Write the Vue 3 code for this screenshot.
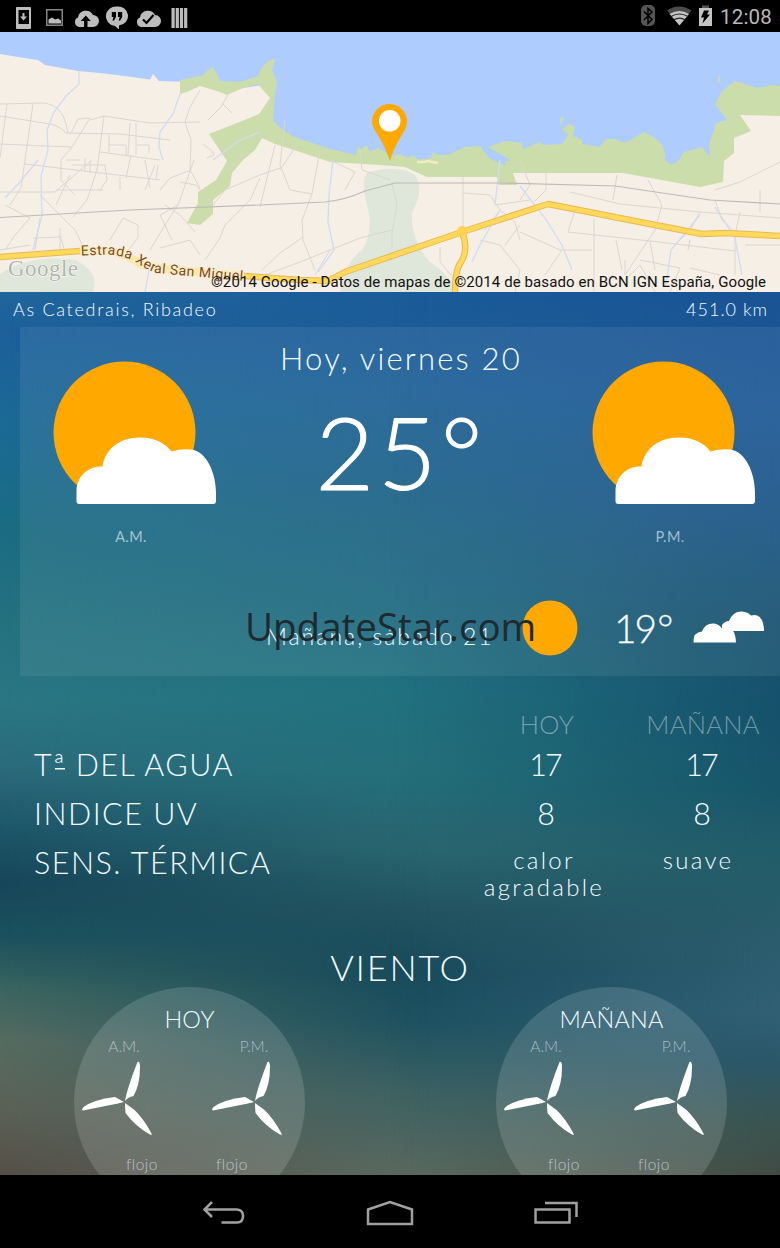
<script setup>
import { ref } from 'vue'

const place = ref({ name: 'As Catedrais, Ribadeo', distance: '451.0 km' })

const halves = ['A.M.', 'P.M.']

const rows = ref([
  { label: 'T', ordinal: 'ª', rest: ' DEL AGUA', today: '17', tomorrow: '17' },
  { label: 'INDICE UV', today: '8', tomorrow: '8' },
  { label: 'SENS. TÉRMICA', today: 'calor agradable', tomorrow: 'suave', small: true }
])

const winds = ref([
  { day: 'HOY', am: 'flojo', pm: 'flojo' },
  { day: 'MAÑANA', am: 'flojo', pm: 'flojo' }
])

// secondary streets of the map
const streets = [
  'M0 104L45 103Q62 106 66 124L68 133M0 116L50 124Q60 126 66 133L120 134L170 140M0 144L71 147M7 104L0 158M33 104L21 188L10 205M25 164L160 180M71 133L78 119L90 118L72 147L61 160V180L75 195M90 120L104 116L150 123L200 122M104 116L97 170L87 200L73 217M130 123L128 155M136 123V155M109 135V152M100 152L160 160M108 145H126V155M137 145H149V153M131 155L126 178M158 165L156 180M85 158V172M90 161V173M66 160H80M120 177V190',
  'M208 120L220 108L228 95M222 103L232 113M203 144L212 151L214 155L207 158M200 90L190 107L185 122L191 140L190 170L200 188M180 182L196 185L213 205L225 190L260 175M191 170L170 178L160 190M245 150L230 170M285 120L280 165L290 190L312 194L320 150M260 207L275 145M300 140L280 170M312 194L302 220L303 240L315 270M260 175L280 168M330 160L355 172L345 190M360 150L362 170L390 180',
  'M0 192H55L86 165L92 160M5 205L30 218L15 235L5 250M40 218L35 250M60 235L65 252M33 238L60 237M70 175L56 205M72 165L105 165L107 180L100 190M56 190H103M40 195L75 230L85 250M110 240L123 218L138 225V238L128 250M145 160L150 188M155 165L145 190M194 160L178 205L165 225L150 250M165 205L180 215L195 232M160 248L190 240L200 255M178 205L160 215L172 240M205 260L220 238L225 225L250 200L260 178M60 228V252L79 254M0 250L30 245',
  'M392 183L397 205L392 232V248M392 230L360 238L330 250L300 262L265 275M330 250L315 275M303 237L280 253L262 270M463 177V230M463 193L490 195L500 210L485 230M440 247V262L455 280M500 210L515 222L520 240M495 205L530 200M520 160L530 185L520 200M546 172V190L533 203M570 192L620 204L700 212L780 218M617 175L613 200M648 180L662 205L655 230L625 275M594 218V292M568 232L650 241L735 251M568 232L575 210M520 232L560 250H592M545 275L562 250M616 240L622 270M650 241L655 270M640 260L680 268M625 280L640 265L655 292M680 268L670 292M715 200L722 220L735 232V275M715 190L740 182L780 162M690 240L688 250M480 240L500 245L520 270L515 292M520 225L505 245M740 212L735 235M700 212L690 230L680 240M625 260V275M690 268L720 275M745 245H780M760 190V212'
]
</script>

<template>
  <div class="device">
    <header class="status">
      <svg class="status-left" viewBox="0 0 200 24" width="200" height="24">
        <g fill="#bdbdbd">
          <path fill-rule="evenodd" d="M17 2h13q1 0 1 1v20q0 1-1 1H17q-1 0-1-1V3q0-1 1-1zm1.500 3v14h10.500V5z" />
          <path d="M22.500 8h2v3.500h2.500l-3.500 4-3.500-4h2.500z" />
          <path fill-rule="evenodd" d="M46 4h17v17H46zm1.500 1.500v14h14v-14z" opacity=".7" />
          <path d="M48.500 18.500v-4l3.500-2 3 2 3-1 3 2v3z" />
          <path d="M79 22a5 5 0 0 1-1-9.500A8 8 0 0 1 93 10a6 6 0 0 1 0 12z" />
          <path d="M117 1.500a10 9.500 0 0 1 2 19v4l-4-3.500A10 9.700 0 0 1 117 1.500z" />
          <path d="M141 22a5 5 0 0 1-1-9.500A8 8 0 0 1 155 10a6 6 0 0 1 0 12z" />
          <path d="M171.500 3h3.200v20h-3.200zM175.700 3h3.200v20h-3.200zM179.900 3h3.200v20h-3.200zM184.100 3h3.200v20h-3.200z" />
        </g>
        <path fill="#000" d="M85.800 10.500l5 5.500h-3.300v7h-3.400v-7h-3.300zM111.800 7h4.200v5l-2 3.500h-1.500l1-3.500h-1.700zM118 7h4.200v5l-2 3.500h-1.500l1-3.500H118z" />
        <path fill="none" stroke="#000" stroke-width="2.200" d="M143 14.500l3.500 3.500 7-8" />
      </svg>
      <div class="status-right">
        <svg viewBox="0 0 76 24" width="76" height="24">
          <rect x="1" y="1" width="14" height="21" rx="5" fill="#555" />
          <path fill="none" stroke="#000" stroke-width="1.500" d="M4 7.500l8 8-4 4v-15l4 3.500-8 8" />
          <path fill="#4b4b4b" d="M27 6.500q12-8 24.500 0L39.500 21z" />
          <path fill="#c4c4c4" d="M29.500 10q10-6 19.500 0L39.500 21.500z" />
          <path fill="none" stroke="#222" stroke-width="1.200" d="M31 12.500q8.500-5 17 0M34 15.800q5.500-3.500 11 0" />
          <path fill="#c4c4c4" d="M59 4h13v18H59z" />
          <path fill="#555" d="M62 1.500h7V4h-7z" />
          <path fill="#000" d="M64 6.500h5l-2 4h3l-7.500 9 1.500-6h-3z" />
        </svg>
        <span class="clock">12:08</span>
      </div>
    </header>

    <svg class="map" viewBox="0 32 780 260" width="780" height="260">
      <defs>
        <path id="road-a" d="M81 255.500L108 254.500Q126 256 137 263Q147 270 156 273L244 281" />
      </defs>
      <rect y="32" width="780" height="260" fill="#aecdfe" />
      <path fill="#f6efe6" d="M0 54L18 57L38 60L45 65L78 71L105 73.500L150 79.500L153 74L159 81L190 82L230 90L262 85L271 98L262 120L280 145L360 158L500 170L700 172L735 115L780 112V292H0z" />
      <path fill="#dee7d9" d="M368 172Q400 164 415 175Q425 190 412 212Q410 240 430 262Q450 275 456 292H340Q345 262 362 250Q374 232 367 205Q360 180 368 172zM0 274Q30 254 75 260Q100 272 93 292H0z" />
      <path
        fill="#cbddaa"
        d="M180 80L195 77L203 75L208 70L213 67L218 76L220 81L240 82L258 76L262 67L268 61L275 59L272 70L277 82L275 95L273 120Q283 133 300 139L330 149L356 155L358 147L362 149L366 145L370 152L377 148L384 151L390 157L400 154L408 158L414 155L418 160L431 158L433 151L437 155L448 155L465 147L480 146L484 152L502 162L510 160L488 147L505 141L522 143L523 149L540 142L543 145L562 144L568 135L562 129L569 124L575 127L573 136L582 140V144L600 147L606 139L615 139L625 143L644 132L655 138L663 146L666 160L676 163L684 152L702 147L710 157L709 145L716 123L727 120L715 104L722 91L735 81L757 88L772 85L780 86V116L740 115L751 131L734 138V153L724 161L723 182L700 187L623 173H513L517 185H499L497 177H427L405 167L380 165L330 162L300 152L275 144L262 138L255 150L243 160L232 173L230 186L213 200V214L200 225L187 223L198 203L198 192L216 180L227 161L221 152L209 134L237 123L259 114L270 98L258 84L243 88L227 95L217 91L200 86L187 92L180 94z"
      />
      <path fill="#cbddaa" d="M560 118l4-1-3 10zM718 80l2-6v8h-4z" />
      <path fill="none" stroke="#aecdfe" stroke-width="3" d="M484 148L490 157L505 164M665 158L671 163L679 158" />
      <path fill="none" stroke="#dcd6d0" stroke-width="1" v-for="(d, i) in streets" :key="i" :d="d" />
      <path fill="none" stroke="#cfdcf3" stroke-width="1.300" d="M79 71V84L66 96L54 112L47 130L48 150L41 176L42 215L33 250M180 94L173 114L160 132L159 147L163 160M38 160L20 182L5 198M333 160L329 195L328 222L334 250L318 272M520 186L545 218L562 245L572 270M700 215L671 250L666 285M715 207L735 238L742 275M500 160L495 205M500 210L480 245L472 262M213 160L240 140L260 132M145 292L150 265" />
      <path fill="none" stroke="#bfbab5" stroke-width="1.200" d="M0 217.500L60 214L130 210L260 205L325 202Q345 200 365 191L395 183H500L615 186L710 200L780 204" />
      <path fill="none" stroke="#f3ecc0" stroke-width="2.500" d="M417 162h8l2-1 11 2" />
      <g fill="none" stroke-linejoin="round">
        <path stroke="#e9b850" stroke-width="6.500" d="M0 257L80 251M244 276L300 280L328 281L345 272L462 232L548 204L650 224L702 234L725 233L780 236M462 232Q469 250 461 262Q455 270 455 292" />
        <path stroke="#ffd95c" stroke-width="4.500" d="M0 257L80 251M244 276L300 280L328 281L345 272L462 232L548 204L650 224L702 234L725 233L780 236M462 232Q469 250 461 262Q455 270 455 292" />
        <path stroke="#fbe9a0" stroke-width="8" d="M80 251L112 251Q130 256 142 265L165 269L244 276" />
      </g>
      <circle cx="462" cy="231" r="5" fill="#ffd24f" />
      <text class="road"><textPath href="#road-a" textLength="166">Estrada Xeral San Miguel</textPath></text>
      <text class="glogo" x="8" y="276" textLength="70">Google</text>
      <text class="credit" x="211" y="287" textLength="555">©2014 Google - Datos de mapas de ©2014 de basado en BCN IGN España, Google</text>
      <path fill="#ffa800" d="M390 161Q386 148 376 132Q372 126 372 121.500a17.500 17.500 0 0 1 35 0Q407 127 403 133Q393 149 390 161z" />
      <circle cx="389.700" cy="120.800" r="10.800" fill="#fff" />
    </svg>

    <main class="content">
      <div class="place">
        <span class="place-name">{{ place.name }}</span>
        <span class="distance">{{ place.distance }}</span>
      </div>

      <section class="forecast">
        <div class="today">
          <div v-for="(half, i) in halves" :key="half" class="half" :class="{ last: i === 1 }">
            <svg viewBox="0 0 170 144" width="170" height="144">
              <circle cx="78.500" cy="71.500" r="71" fill="#ffa800" />
              <path fill="#fff" d="M33 143Q30.500 143 30.500 140V130C31 115 42 105 56.500 105.500C59 88 74 76 95 76.500Q115 77 125.500 90.500Q135 87.500 145 88.500C160 90 170 111 170 132V140Q170 143 167 143z" />
            </svg>
            <span class="half-label">{{ half }}</span>
          </div>
          <div class="now">
            <h1>Hoy, viernes 20</h1>
            <p class="temp">25<span>°</span></p>
          </div>
        </div>
        <div class="tomorrow">
          <span class="tomorrow-label">Mañana, sábado 21</span>
          <svg class="sun" viewBox="0 0 56 56" width="56" height="56">
            <circle cx="28" cy="28" r="27.500" fill="#ffa800" />
          </svg>
          <span class="tomorrow-temp">19<span>°</span></span>
          <svg class="clouds" viewBox="0 0 72 34" width="72" height="34">
            <path fill="#fff" d="M29 20V14Q32 10 36 10Q40 0 49 .5Q55 1 58 4.500Q67 2 70 12Q71 16 71 20H42z" />
            <path fill="#fff" d="M.5 31.500Q0 21 9 20.500Q12 12 21 12.500Q26 13 28.500 17Q42 12 43 31.500z" />
          </svg>
          <span class="watermark">UpdateStar.com</span>
        </div>
      </section>

      <section class="conditions">
        <div class="row head">
          <span></span>
          <span>HOY</span>
          <span>MAÑANA</span>
        </div>
        <div v-for="row in rows" :key="row.label" class="row" :class="{ small: row.small }">
          <span class="label">{{ row.label }}<u v-if="row.ordinal">{{ row.ordinal }}</u>{{ row.rest }}</span>
          <span class="value">{{ row.today }}</span>
          <span class="value">{{ row.tomorrow }}</span>
        </div>
      </section>

      <h2>VIENTO</h2>
      <section class="wind">
        <div v-for="wind in winds" :key="wind.day" class="dial">
          <h3>{{ wind.day }}</h3>
          <div class="mills">
            <div v-for="half in halves" :key="half" class="mill">
              <span>{{ half }}</span>
              <svg viewBox="0 0 72 75" width="72" height="75">
                <g fill="#fff">
                  <path d="M43 40Q45 28 55.500 1Q58 0 58 6Q58 24 51.500 35Q46 36 43 40z" />
                  <path d="M42 41L33 36Q12 38.500 1.500 46Q-1 49 1 49.500L36 42.500z" />
                  <path d="M43 42Q43 47 43.500 52Q54 66 68 73.500Q71 75 69 71.500Q61 57 52.500 49z" />
                </g>
              </svg>
            </div>
          </div>
          <div class="strength">
            <span>{{ wind.am }}</span>
            <span>{{ wind.pm }}</span>
          </div>
        </div>
      </section>
    </main>

    <nav class="navbar">
      <svg viewBox="0 0 44 24" width="44" height="24">
        <path d="M10 1L2.500 8.500L10 16M3 8.500H35Q41 9 41 15Q41 21.500 35 21.500H19.500" />
      </svg>
      <svg viewBox="0 0 48 26" width="48" height="26">
        <path d="M2 9.500L24 2L46 9.500V24H2z" />
      </svg>
      <svg viewBox="0 0 44 24" width="44" height="24">
        <path d="M1.500 8.500H35.500V21.500H1.500zM11 2H42.500V16" />
      </svg>
    </nav>
  </div>
</template>

<style>
body {
  margin: 0;
  background: #000;
}
</style>

<style scoped>
.device {
  width: 780px;
  height: 1248px;
  display: flex;
  flex-direction: column;
  overflow: hidden;
  color: #f2fbff;
  font-family: Lato, 'Liberation Sans', sans-serif;
  font-weight: 300;
}

h1,
h2,
h3,
p {
  margin: 0;
  font-weight: 300;
}

.status {
  height: 32px;
  display: flex;
  align-items: center;
  background: #000;
  padding: 0 8px 0 0;
  box-sizing: border-box;
}

.status-left {
  margin-top: 1px;
}

.status-right {
  display: flex;
  align-items: center;
  gap: 4px;
  margin-left: auto;
}

.clock {
  font: 400 20.5px/32px Roboto, sans-serif;
  color: #b8b8b8;
  letter-spacing: 0.2px;
  margin-top: 2px;
}

.map {
  display: block;
  flex: none;
}

.road {
  font: 400 14px Roboto, sans-serif;
  fill: #7d4a24;
  stroke: #fbf0d0;
  stroke-width: 2px;
  paint-order: stroke;
}

.glogo {
  font: 400 23px 'Liberation Serif', serif;
  fill: #b5b3ad;
  stroke: #fff;
  stroke-width: 1px;
  paint-order: stroke;
}

.credit {
  font: 400 15px Roboto, sans-serif;
  fill: #111;
}

.content {
  position: relative;
  z-index: 0;
  height: 883px;
  overflow: hidden;
  background: linear-gradient(#1b5b99 0, #1f6097 100px, #1d6288 200px, #1f6980 310px, #217280 400px, #24707b 480px, #2a666f 560px, #21535f 620px, #174a5b 680px, #1c5160 730px, #3c6263 800px, #5b6b61 883px);
}

.content::before,
.content::after {
  content: '';
  position: absolute;
  inset: 0;
  z-index: -1;
}

.content::before {
  background: linear-gradient(#20669b 0, #1c609a 40px, #1b6995 130px, #1b6c82 240px, #24717f 330px, #2a7683 410px, #2b6b7b 475px, #1d5669 535px, #164659 590px, #1b515d 645px, #3c655f 700px, #566b60 750px, #5b6055 820px, #544f47 883px);
  mask-image: linear-gradient(90deg, #000, transparent 55%);
}

.content::after {
  background: linear-gradient(#195394 0, #1d5995 120px, #1b5587 220px, #18516f 330px, #15516b 420px, #17566a 500px, #235d69 570px, #295c6b 630px, #305f74 720px, #2b586a 770px, #395450 830px, #414b45 883px);
  mask-image: linear-gradient(270deg, #000, transparent 50%);
}

.place {
  height: 35px;
  padding: 0 12px 0 13px;
  display: flex;
  justify-content: space-between;
  font-size: 18px;
  line-height: 35px;
}

.place-name {
  letter-spacing: 1.7px;
}

.distance {
  letter-spacing: 1px;
}

.forecast {
  height: 349px;
  margin-left: 20px;
  background: rgba(255, 255, 255, 0.07);
}

.today {
  display: grid;
  grid-template-columns: 222px 1fr 220px;
  height: 256px;
}

.half {
  grid-column: 1;
  grid-row: 1;
  display: flex;
  flex-direction: column;
  align-items: center;
  padding-top: 34px;
}

.half.last {
  grid-column: 3;
}

.half-label {
  margin-top: 23px;
  font-size: 14.5px;
  line-height: 18px;
  letter-spacing: 0.4px;
  color: rgba(242, 251, 255, 0.6);
  font-weight: 400;
}

.now {
  grid-column: 2;
  grid-row: 1;
  text-align: center;
}

h1 {
  margin-top: 11px;
  font-size: 31px;
  line-height: 40px;
  letter-spacing: 2.2px;
}

.temp {
  font-size: 101px;
  line-height: 120px;
  margin-top: 13px;
  letter-spacing: 4px;
  color: #fff;
  -webkit-text-stroke: 1px #fff;
}

.tomorrow {
  position: relative;
  display: flex;
  align-items: center;
  height: 90px;
  padding-left: 246px;
}

.tomorrow-label {
  width: 256px;
  font-size: 23px;
  letter-spacing: 2px;
  white-space: nowrap;
  padding-top: 16px;
}

.tomorrow-temp {
  width: 79px;
  margin-left: 36px;
  font-size: 39px;
  letter-spacing: -2px;
  margin-top: -1px;
  -webkit-text-stroke: 0.3px #fff;
}

.tomorrow-temp span {
  margin-left: 2px;
}

.watermark {
  position: absolute;
  left: 225px;
  top: 16px;
  font: 400 38.5px/54px 'Open Sans', sans-serif;
  color: #1d2a30;
}

.conditions {
  padding: 30px 0 0 34px;
}

.row {
  display: grid;
  grid-template-columns: 433px 156px 156px;
  height: 49px;
  line-height: 49px;
  font-size: 30.5px;
}

.label {
  letter-spacing: 1.5px;
}

.label u {
  text-decoration: none;
  background: linear-gradient(currentColor, currentColor) 2px 22px / 10px 1.5px no-repeat;
}

.row.head {
  height: 34px;
  line-height: 37px;
  font-size: 25.5px;
  letter-spacing: 0.3px;
  color: rgba(242, 251, 255, 0.42);
}

.head span,
.value {
  text-align: center;
}

.head span {
  padding-left: 4px;
}

.value {
  letter-spacing: -2px;
}

.small .value {
  font-size: 24px;
  line-height: 27px;
  letter-spacing: 2.3px;
  padding: 8px 8px 0 6px;
}

.small .value:last-child {
  padding-right: 12px;
}

h2 {
  margin-top: 58px;
  padding-left: 20px;
  text-align: center;
  font-size: 36px;
  line-height: 44px;
  letter-spacing: 1.8px;
}

.wind {
  display: flex;
  gap: 192px;
  margin-top: -2px;
  padding-left: 74px;
}

.dial {
  width: 231px;
  height: 231px;
  margin-right: -1px;
  flex: none;
  border-radius: 50%;
  background: rgba(255, 255, 255, 0.14);
  text-align: center;
}

h3 {
  padding-top: 17px;
  font-size: 23.5px;
  line-height: 30px;
  letter-spacing: 0.2px;
}

.mills {
  display: flex;
  gap: 58px;
  padding-left: 8px;
}

.mill {
  width: 72px;
  font-size: 15.5px;
  line-height: 20px;
  color: rgba(242, 251, 255, 0.55);
}

.mill span {
  display: block;
  height: 27px;
  line-height: 25px;
  padding-left: 12px;
}

.mill svg {
  display: block;
}

.strength {
  display: flex;
  gap: 58px;
  padding-left: 52px;
  margin-top: 18px;
  font-size: 15.5px;
  line-height: 20px;
  letter-spacing: 0.5px;
  color: rgba(242, 251, 255, 0.6);
}

.navbar {
  height: 73px;
  display: flex;
  justify-content: center;
  align-items: center;
  gap: 120px;
  background: #000;
  padding-top: 2px;
  box-sizing: border-box;
}

.navbar path {
  fill: none;
  stroke: #a0a0a0;
  stroke-width: 2.5;
}
</style>
